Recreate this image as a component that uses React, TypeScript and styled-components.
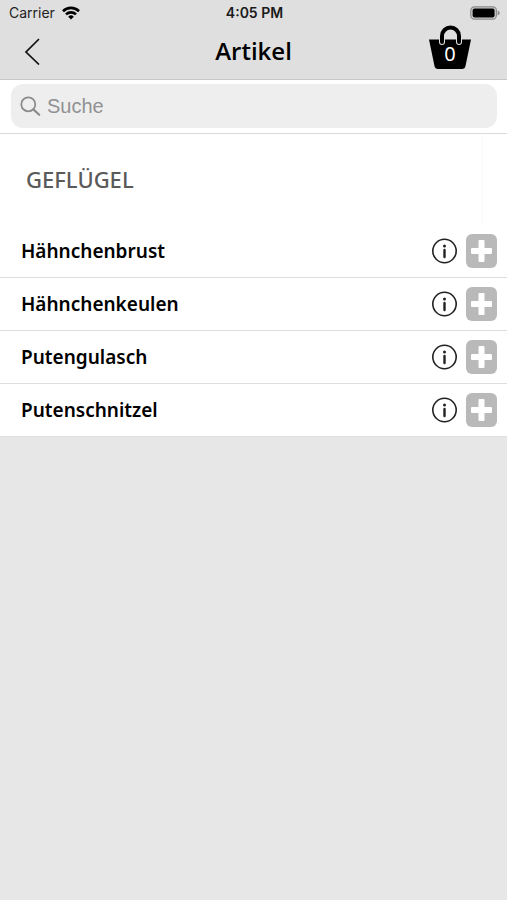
import React, { useState } from "react";
import styled, { createGlobalStyle } from "styled-components";

const GlobalStyle = createGlobalStyle`
  *, *::before, *::after { box-sizing: border-box; }
  body {
    margin: 0;
    background: #e7e7e7;
    color: #000;
    font-family: "Noto Sans", "Open Sans", sans-serif;
  }
  button { font: inherit; color: inherit; background: none; border: 0; padding: 0; cursor: pointer; }
  svg { display: block; }
`;

const Header = styled.header`
  background: #dfdfdf;
  border-bottom: 1px solid #c8c8c8;
`;

const StatusBar = styled.div`
  display: grid;
  grid-template-columns: 1fr auto 1fr;
  align-items: center;
  height: 26px;
  padding: 0 7px 0 9px;
  font-family: Inter, "Liberation Sans", sans-serif;
  font-size: 14px;
  line-height: 26px;
`;

const Carrier = styled.div`
  display: flex;
  align-items: center;
  gap: 7px;
  color: #222;
`;

const Clock = styled.time`
  font-weight: 600;
  color: #1a1a1a;
`;

const Battery = styled.div`
  display: flex;
  justify-content: flex-end;
`;

const NavBar = styled.nav`
  display: grid;
  grid-template-columns: 1fr auto 1fr;
  align-items: center;
  height: 53px;
  padding: 0 35px 4px 20px;
`;

const BackButton = styled.button`
  display: grid;
  place-items: center;
  width: 24px;
  height: 40px;
`;

const Title = styled.h1`
  margin: 0;
  padding-left: 15px;
  font-family: "Open Sans", sans-serif;
  font-size: 24px;
  line-height: 32px;
  font-weight: 600;
`;

const BasketButton = styled.button`
  position: relative;
  align-self: start;
  justify-self: end;
  width: 44px;
  height: 45px;
`;

const BasketCount = styled.span`
  position: absolute;
  inset: 16px 0 auto 0;
  color: #fff;
  font-size: 20px;
  line-height: 24px;
  text-align: center;
`;

const SearchBar = styled.form`
  padding: 4px 10px 5px 11px;
  background: #fff;
  border-bottom: 1px solid #dadada;
`;

const SearchField = styled.label`
  display: flex;
  align-items: center;
  gap: 6px;
  height: 44px;
  padding: 0 9px;
  background: #eee;
  border-radius: 12px;
`;

const SearchInput = styled.input`
  flex: 1;
  min-width: 0;
  padding: 0;
  border: 0;
  outline: 0;
  background: transparent;
  font-family: "Liberation Sans", sans-serif;
  font-size: 20px;
  line-height: 28px;
  color: #222;
  &::placeholder { color: #919193; opacity: 1; }
`;

const SectionHeader = styled.div`
  padding-right: 24px;
  background: #fff;
`;

const SectionTitle = styled.h2`
  margin: 0;
  padding: 31px 26px 32px;
  border-right: 1px solid #f8f8f8;
  color: #5a5a5a;
  font-size: 22px;
  line-height: 28px;
  font-weight: 500;
`;

const List = styled.ul`
  margin: 0;
  padding: 0;
  list-style: none;
  background: #fff;
`;

const Row = styled.li`
  display: flex;
  align-items: center;
  gap: 9px;
  padding: 9px 10px 9px 21px;
  border-bottom: 1px solid #dedede;
`;

const Name = styled.span`
  flex: 1;
  font-size: 19px;
  line-height: 26px;
  font-weight: 600;
`;

const AddButton = styled.button`
  display: grid;
  place-items: center;
  width: 31px;
  height: 34px;
  border-radius: 6px;
  background: #b9b9b9;
`;

const articles = ["Hähnchenbrust", "Hähnchenkeulen", "Putengulasch", "Putenschnitzel"];

const WifiIcon = () => (
  <svg width="18" height="14" viewBox="0 0 18 14" aria-hidden="true">
    <g fill="none" stroke="#000" strokeWidth="2.6">
      <path d="M1 5.2a11.4 11.4 0 0 1 16 0" />
      <path d="M4 8.4a7.1 7.1 0 0 1 10 0" />
    </g>
    <path d="M9 13.6 6.2 10.7a4 4 0 0 1 5.6 0Z" />
  </svg>
);

const BatteryIcon = () => (
  <svg width="30" height="14" viewBox="0 0 30 14" aria-hidden="true">
    <rect x="0.8" y="0.8" width="25.6" height="12.4" rx="3.6" fill="#d0d0d0" stroke="#8c8c8c" strokeWidth="1.2" />
    <rect x="2.6" y="2.6" width="22" height="8.8" rx="1.8" />
    <path d="M27.6 4.6q2.2.8 2.2 2.4t-2.2 2.4Z" fill="#8c8c8c" />
  </svg>
);

const BackIcon = () => (
  <svg width="16" height="28" viewBox="0 0 16 28" fill="none" stroke="#111" strokeWidth="1.7" aria-hidden="true">
    <path d="M15 2 2 15l13 12.5" />
  </svg>
);

const BasketIcon = () => (
  <svg width="44" height="45" viewBox="0 0 44 45" overflow="visible" aria-hidden="true">
    <path d="M1 13.5h42l-5.6 27.1a3 3 0 0 1-2.9 2.4h-25a3 3 0 0 1-2.9-2.4Z" />
    <path d="M14 16v-6a8.5 8.5 0 0 1 17 0v6" fill="none" stroke="#dfdfdf" strokeWidth="6" strokeLinecap="round" />
    <path d="M14 16v-6a8.5 8.5 0 0 1 17 0v6" fill="none" stroke="#000" strokeWidth="4" strokeLinecap="round" />
  </svg>
);

const SearchIcon = () => (
  <svg width="21" height="21" viewBox="0 0 21 21" fill="none" stroke="#8c8c8e" aria-hidden="true">
    <circle cx="8.3" cy="8.3" r="7" strokeWidth="1.8" />
    <path d="m13.4 13.4 5.8 5.4" strokeWidth="2.2" strokeLinecap="round" />
  </svg>
);

const InfoIcon = () => (
  <svg width="26" height="26" viewBox="0 0 26 26" aria-hidden="true">
    <circle cx="13.5" cy="13" r="11.7" fill="none" stroke="#222" strokeWidth="1.6" />
    <circle cx="13.5" cy="8" r="1.5" fill="#222" />
    <path d="M13.5 12v7" stroke="#222" strokeWidth="2.4" strokeLinecap="round" />
  </svg>
);

const PlusIcon = () => (
  <svg width="21" height="22" viewBox="0 0 21 22" aria-hidden="true">
    <path
      d="M8.5 0h4a1 1 0 0 1 1 1v7H20a1 1 0 0 1 1 1v4a1 1 0 0 1-1 1h-6.5v7a1 1 0 0 1-1 1h-4a1 1 0 0 1-1-1v-7H1a1 1 0 0 1-1-1V9a1 1 0 0 1 1-1h6.5V1a1 1 0 0 1 1-1Z"
      fill="#fff"
    />
  </svg>
);

export default function App() {
  const [query, setQuery] = useState("");
  const [count, setCount] = useState(0);
  const shown = articles.filter((name) => name.toLowerCase().includes(query.toLowerCase()));

  return (
    <>
      <GlobalStyle />
      <Header>
        <StatusBar>
          <Carrier>
            Carrier
            <WifiIcon />
          </Carrier>
          <Clock>4:05 PM</Clock>
          <Battery>
            <BatteryIcon />
          </Battery>
        </StatusBar>
        <NavBar>
          <BackButton type="button" aria-label="Zurück">
            <BackIcon />
          </BackButton>
          <Title>Artikel</Title>
          <BasketButton type="button" aria-label="Warenkorb">
            <BasketIcon />
            <BasketCount>{count}</BasketCount>
          </BasketButton>
        </NavBar>
      </Header>
      <main>
        <SearchBar role="search" onSubmit={(event) => event.preventDefault()}>
          <SearchField>
            <SearchIcon />
            <SearchInput
              type="text"
              placeholder="Suche"
              aria-label="Suche"
              value={query}
              onChange={(event) => setQuery(event.target.value)}
            />
          </SearchField>
        </SearchBar>
        <SectionHeader>
          <SectionTitle>GEFLÜGEL</SectionTitle>
        </SectionHeader>
        <List>
          {shown.map((name) => (
            <Row key={name}>
              <Name>{name}</Name>
              <button type="button" aria-label={`Info zu ${name}`}>
                <InfoIcon />
              </button>
              <AddButton type="button" aria-label={`${name} hinzufügen`} onClick={() => setCount(count + 1)}>
                <PlusIcon />
              </AddButton>
            </Row>
          ))}
        </List>
      </main>
    </>
  );
}
